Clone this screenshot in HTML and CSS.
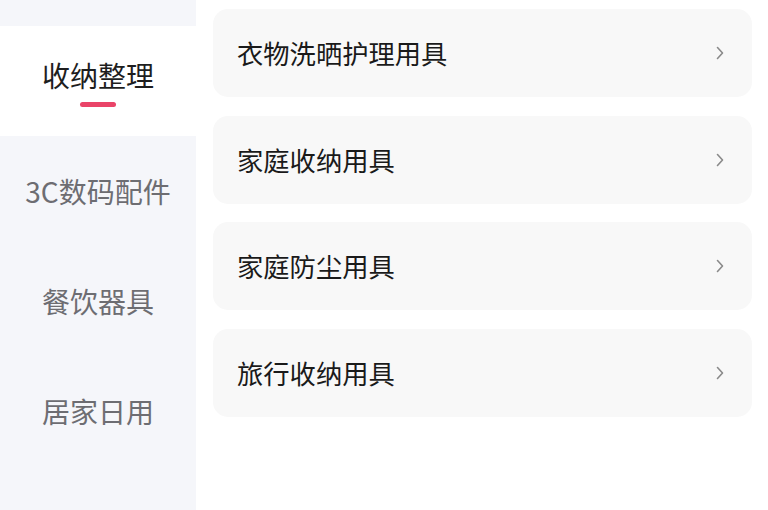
FILE: index.html
```html
<!DOCTYPE html>
<html lang="zh">
<head>
<meta charset="utf-8">
<link rel="stylesheet" href="styles.css">
</head>
<body>
<div class="page">
  <nav class="sidebar">
    <div class="side-top"></div>
    <div class="side-item active">
      <span class="side-label">收纳整理</span>
      <span class="side-bar"></span>
    </div>
    <div class="side-item">3C数码配件</div>
    <div class="side-item">餐饮器具</div>
    <div class="side-item">居家日用</div>
  </nav>
  <main class="content">
    <div class="card"><span class="card-title">衣物洗晒护理用具</span><svg class="chev" viewBox="0 0 8 14" width="8" height="14"><path d="M1.5 1.5 L6.5 7 L1.5 12.5" fill="none" stroke="#8a8a8a" stroke-width="1.6" stroke-linecap="round" stroke-linejoin="round"/></svg></div>
    <div class="card"><span class="card-title">家庭收纳用具</span><svg class="chev" viewBox="0 0 8 14" width="8" height="14"><path d="M1.5 1.5 L6.5 7 L1.5 12.5" fill="none" stroke="#8a8a8a" stroke-width="1.6" stroke-linecap="round" stroke-linejoin="round"/></svg></div>
    <div class="card"><span class="card-title">家庭防尘用具</span><svg class="chev" viewBox="0 0 8 14" width="8" height="14"><path d="M1.5 1.5 L6.5 7 L1.5 12.5" fill="none" stroke="#8a8a8a" stroke-width="1.6" stroke-linecap="round" stroke-linejoin="round"/></svg></div>
    <div class="card"><span class="card-title">旅行收纳用具</span><svg class="chev" viewBox="0 0 8 14" width="8" height="14"><path d="M1.5 1.5 L6.5 7 L1.5 12.5" fill="none" stroke="#8a8a8a" stroke-width="1.6" stroke-linecap="round" stroke-linejoin="round"/></svg></div>
  </main>
</div>
</body>
</html>
```
FILE: styles.css
```css
html, body {
  margin: 0;
  padding: 0;
  background: #ffffff;
}
body {
  font-family: "Noto Sans CJK SC", "Noto Sans", sans-serif;
  width: 768px;
  height: 510px;
  overflow: hidden;
}
.page {
  display: flex;
  width: 768px;
  height: 510px;
  overflow: hidden;
}
.sidebar {
  width: 196px;
  flex: none;
  background: #f5f6fa;
  display: flex;
  flex-direction: column;
  overflow: hidden;
}
.side-top {
  height: 26px;
  flex: none;
}
.side-item {
  height: 110px;
  flex: none;
  display: flex;
  flex-direction: column;
  align-items: center;
  justify-content: center;
  font-size: 28px;
  line-height: 30px;
  color: #6d6d72;
}
.side-item.active {
  background: #ffffff;
  color: #1e1e1e;
  padding-top: 4px;
  box-sizing: border-box;
}
.side-bar {
  display: block;
  width: 36px;
  height: 5px;
  border-radius: 3px;
  background: #ea4468;
  margin-top: 12px;
}
.content {
  flex: 1;
  display: flex;
  flex-direction: column;
  gap: 18.5px;
  padding: 9px 16px 0 17px;
}
.card {
  height: 88px;
  flex: none;
  border-radius: 15px;
  background: #f8f8f8;
  display: flex;
  align-items: center;
  justify-content: space-between;
  padding: 0 28px 0 24px;
}
.card-title {
  font-size: 26.3px;
  line-height: 30px;
  color: #1a1a1a;
}
.chev {
  display: block;
}
```
